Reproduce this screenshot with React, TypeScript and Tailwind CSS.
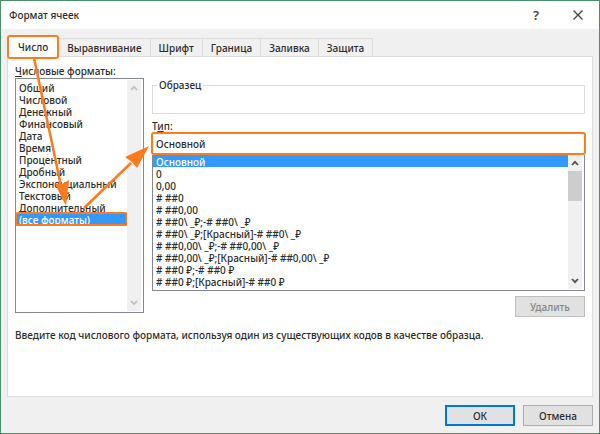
import { useState } from 'react';
import clsx from 'clsx';

const tabs = ['Число', 'Выравнивание', 'Шрифт', 'Граница', 'Заливка', 'Защита'];

const categories = [
  'Общий',
  'Числовой',
  'Денежный',
  'Финансовый',
  'Дата',
  'Время',
  'Процентный',
  'Дробный',
  'Экспоненциальный',
  'Текстовый',
  'Дополнительный',
  '(все форматы)',
];

const formats = [
  'Основной',
  '0',
  '0,00',
  '# ##0',
  '# ##0,00',
  '# ##0\\ _₽;-# ##0\\ _₽',
  '# ##0\\ _₽;[Красный]-# ##0\\ _₽',
  '# ##0,00\\ _₽;-# ##0,00\\ _₽',
  '# ##0,00\\ _₽;[Красный]-# ##0,00\\ _₽',
  '# ##0 ₽;-# ##0 ₽',
  '# ##0 ₽;[Красный]-# ##0 ₽',
];

const optionClass =
  'block h-3 min-h-3 px-[3px] py-0 leading-3 font-medium text-[#2b2b2b] checked:bg-[#3399ff] checked:bg-linear-to-r checked:from-[#3399ff] checked:to-[#3399ff] checked:text-white';

const Chevron = ({ down }: { down?: boolean }) => (
  <svg viewBox="0 0 8 6" className="h-[6px] w-2" fill="none" stroke="currentColor" strokeWidth="1.8">
    <path d={down ? 'M1 1l3 3.2L7 1' : 'M1 5l3-3.2L7 5'} />
  </svg>
);

const ScrollBar = ({ active }: { active?: boolean }) => (
  <div
    className={clsx(
      'mr-[2px] flex w-[14px] shrink-0 flex-col bg-[#f0f0f0]',
      active ? 'text-[#505050]' : 'text-[#bfbfbf]'
    )}
  >
    <button type="button" aria-label="Вверх" className="flex h-4 items-center justify-center">
      <Chevron />
    </button>
    <div className="flex-1">{active && <div className="h-[30px] bg-[#cdcdcd]" />}</div>
    <button type="button" aria-label="Вниз" className="flex h-4 items-center justify-center">
      <Chevron down />
    </button>
  </div>
);

// стрелки-подсказки поверх окна
const Arrows = () => (
  <svg
    viewBox="0 0 600 434"
    className="pointer-events-none absolute -top-px -left-px h-[434px] w-[600px]"
    fill="#ff7a1a"
    stroke="#ff7a1a"
  >
    <path d="M34 58L61 186M84 208L131 163" strokeWidth="2.5" fill="none" />
    <path d="M66 206L55 184L62 184L69 180Z" stroke="none" />
    <path d="M149 146L137 168L132 162L125 157Z" stroke="none" />
  </svg>
);

const App = () => {
  const [tab, setTab] = useState('Число');
  const [category, setCategory] = useState('(все форматы)');
  const [format, setFormat] = useState('Основной');

  return (
    <div className="relative flex min-h-screen flex-col border border-[#4a8f6b] bg-[#f0f0f0] font-['Noto_Sans','Open_Sans',sans-serif] text-[10px] leading-3 font-medium text-[#2b2b2b]">
      {/* заголовок */}
      <header className="flex h-7 items-center justify-between bg-white pr-4 pl-2">
        <h1>Формат ячеек</h1>
        <div className="flex items-center gap-[34px] text-[#404040]">
          <button type="button" aria-label="Справка" className="text-[13px] font-semibold">
            ?
          </button>
          <button type="button" aria-label="Закрыть">
            <svg viewBox="0 0 10 10" className="size-[10px]" stroke="currentColor" strokeWidth="1.3">
              <path d="M0.5 0.5l9 9M9.5 0.5l-9 9" />
            </svg>
          </button>
        </div>
      </header>

      {/* вкладки */}
      <div role="tablist" className="-mb-[3px] flex items-end px-[6px] pt-[6px]">
        {tabs.map((name, i) => (
          <button
            key={name}
            type="button"
            role="tab"
            aria-selected={tab === name}
            onClick={() => setTab(name)}
            className={clsx(
              i === 0
                ? 'z-10 h-6 rounded-[3px] border-2 border-[#ff7a1a] bg-white px-[9px]'
                : 'mb-[3px] h-[18px] border-t border-r border-[#dcdcdc] px-2'
            )}
          >
            {name}
          </button>
        ))}
      </div>

      <main className="mx-[6px] flex flex-1 flex-col border border-[#dcdcdc] bg-white px-[7px] pt-2">
        <div className="flex gap-2">
          <div className="flex w-[129px] shrink-0 flex-col">
            <label htmlFor="category" className="mb-px">
              <u>Ч</u>исловые форматы:
            </label>
            <div className="flex h-[235px] border border-[#828790] py-px">
              <select
                id="category"
                size={12}
                value={category}
                onChange={(e) => setCategory(e.target.value)}
                className="min-w-0 flex-1 overflow-hidden pt-px outline-none"
              >
                {categories.map((name) => (
                  <option
                    key={name}
                    className={clsx(
                      optionClass,
                      name === '(все форматы)' &&
                        'rounded-[2px] outline-2 -outline-offset-1 outline-[#ff7a1a]'
                    )}
                  >
                    {name}
                  </option>
                ))}
              </select>
              <ScrollBar />
            </div>
          </div>

          <div className="flex min-w-0 flex-1 flex-col pt-[14px]">
            <fieldset className="h-[35px] border border-[#dcdcdc] px-1">
              <legend className="px-[2px]">Образец</legend>
            </fieldset>
            <label htmlFor="format" className="mt-[6px]">
              Т<u>и</u>п:
            </label>
            <input
              id="format"
              type="text"
              value={format}
              onChange={(e) => setFormat(e.target.value)}
              className="-mx-px h-[23px] rounded-[3px] border-2 border-[#ff7a1a] px-[3px] outline-none"
            />
            <div className="flex h-[136px] border border-t-0 border-[#828790] pb-px">
              <select
                aria-label="Формат"
                size={11}
                value={format}
                onChange={(e) => setFormat(e.target.value)}
                className="min-w-0 flex-1 overflow-hidden outline-none"
              >
                {formats.map((name) => (
                  <option key={name} className={optionClass}>
                    {name}
                  </option>
                ))}
              </select>
              <ScrollBar active />
            </div>
            <button
              type="button"
              disabled
              className="mt-[5px] h-[21px] w-[70px] self-end border border-[#bfbfbf] bg-[#e1e1e1] text-[#838383]"
            >
              Удалить
            </button>
          </div>
        </div>
        <p className="mt-3">
          Введите код числового формата, используя один из существующих кодов в качестве образца.
        </p>
      </main>

      <footer className="flex justify-end gap-2 px-[6px] pt-2 pb-[7px]">
        <button type="button" className="h-[21px] w-[70px] border-2 border-[#0078d7] bg-[#e1e1e1]">
          ОК
        </button>
        <button type="button" className="h-[21px] w-[70px] border border-[#adadad] bg-[#e1e1e1]">
          Отмена
        </button>
      </footer>

      <Arrows />
    </div>
  );
};

export default App;
